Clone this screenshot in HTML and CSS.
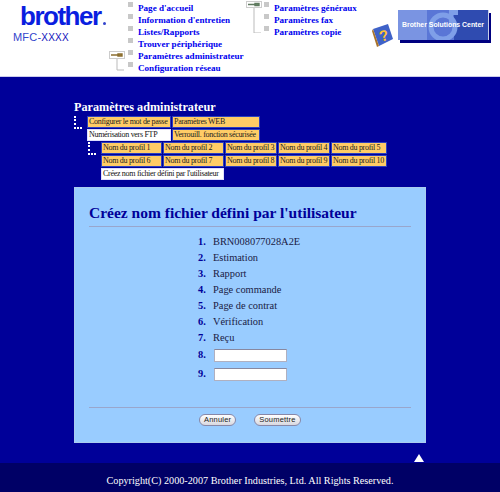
FILE: index.html
```html
<!DOCTYPE html>
<html lang="fr">
<head>
  <meta charset="UTF-8">
  <title>Créez nom fichier défini par l'utilisateur</title>
  <link rel="stylesheet" href="styles.css">
</head>
<body>
  <div class="header">
    <div class="brand">
      <div class="logo">brother<span class="logo-dot"></span></div>
      <div class="model">MFC-<span>XXXX</span></div>
    </div>
    <div class="nav nav-main">
      <svg class="tree" width="16" height="24" viewBox="0 0 16 24">
        <rect x="0.5" y="0.5" width="15" height="7" fill="#fff" stroke="#ccc"/>
        <path d="M2 4h7v-1h4v2h-4v-1" stroke="#8a6d2f" stroke-width="1.4" fill="#a88a40"/>
        <path d="M8 8v11h7" stroke="#bbb" fill="none"/>
      </svg>
      <ul>
        <li><a href="#">Page d'accueil</a></li>
        <li><a href="#">Information d'entretien</a></li>
        <li><a href="#">Listes/Rapports</a></li>
        <li><a href="#">Trouver périphérique</a></li>
        <li><a href="#">Paramètres administrateur</a></li>
        <li><a href="#">Configuration réseau</a></li>
      </ul>
    </div>
    <div class="nav nav-second">
      <svg class="tree" width="16" height="32" viewBox="0 0 16 32">
        <rect x="0.5" y="0.5" width="15" height="6" fill="#fff" stroke="#ccc"/>
        <path d="M2 3.5h7v-1h4v2h-4v-1" stroke="#5f7a5f" stroke-width="1.4" fill="#6a8a6a"/>
        <path d="M8 7v25h7" stroke="#bbb" fill="none"/>
      </svg>
      <ul>
        <li><a href="#">Paramètres généraux</a></li>
        <li><a href="#">Paramètres fax</a></li>
        <li><a href="#">Paramètres copie</a></li>
      </ul>
    </div>
    <svg class="book" width="22" height="25" viewBox="0 0 22 25">
      <path d="M1 6 16 1l5 15-14 7z" fill="#3f62c8"/>
      <path d="M1 6l6 17-2 1L0 8z" fill="#a8722a"/>
      <text x="7" y="18" class="book-mark" transform="rotate(-15 11 12)">?</text>
    </svg>
    <div class="solutions">
      <svg class="solutions-s" width="40" height="30" viewBox="0 0 40 30">
        <circle cx="17" cy="17" r="12" fill="none" stroke="#7f9fe8" stroke-width="5"/>
        <path d="M23 0h9v5h-5v10h-4z" fill="#7f9fe8"/>
      </svg>
      <span>Brother Solutions Center</span>
    </div>
  </div>

  <div class="main">
    <h2 class="section-title">Paramètres administrateur</h2>
    <div class="tabs">
      <div class="corner"></div>
      <div class="tab-grid tab-grid-top">
        <a class="tab" href="#">Configurer le mot de passe</a>
        <a class="tab" href="#">Paramètres WEB</a>
        <a class="tab active" href="#">Numérisation vers FTP</a>
        <a class="tab" href="#">Verrouill. fonction sécurisée</a>
      </div>
    </div>
    <div class="tabs tabs-sub">
      <div class="corner"></div>
      <div class="tab-grid tab-grid-sub">
        <a class="tab" href="#">Nom du profil 1</a>
        <a class="tab" href="#">Nom du profil 2</a>
        <a class="tab" href="#">Nom du profil 3</a>
        <a class="tab" href="#">Nom du profil 4</a>
        <a class="tab" href="#">Nom du profil 5</a>
        <a class="tab" href="#">Nom du profil 6</a>
        <a class="tab" href="#">Nom du profil 7</a>
        <a class="tab" href="#">Nom du profil 8</a>
        <a class="tab" href="#">Nom du profil 9</a>
        <a class="tab" href="#">Nom du profil 10</a>
        <a class="tab active tab-wide" href="#">Créez nom fichier défini par l'utilisateur</a>
      </div>
    </div>

    <div class="panel">
      <h1>Créez nom fichier défini par l'utilisateur</h1>
      <hr>
      <ol class="names">
        <li><b>1.</b><span>BRN008077028A2E</span></li>
        <li><b>2.</b><span>Estimation</span></li>
        <li><b>3.</b><span>Rapport</span></li>
        <li><b>4.</b><span>Page commande</span></li>
        <li><b>5.</b><span>Page de contrat</span></li>
        <li><b>6.</b><span>Vérification</span></li>
        <li><b>7.</b><span>Reçu</span></li>
        <li class="field"><b>8.</b><input type="text"></li>
        <li class="field"><b>9.</b><input type="text"></li>
      </ol>
      <hr class="rule-bottom">
      <div class="actions">
        <button type="button">Annuler</button>
        <button type="button">Soumettre</button>
      </div>
    </div>
    <div class="top-row"><span class="to-top"></span></div>
  </div>

  <div class="footer">Copyright(C) 2000-2007 Brother Industries, Ltd. All Rights Reserved.</div>
</body>
</html>
```

FILE: styles.css
```css
body {
  margin: 0;
  height: 492px;
  overflow: hidden;
  display: flex;
  flex-direction: column;
  background: #000099;
  font-family: "Liberation Serif", serif;
}
.header {
  height: 76px;
  background: #fff;
  border-bottom: 1px solid #ccccee;
  display: flex;
  flex-shrink: 0;
}
.brand {
  width: 96px;
  padding-left: 13px;
  flex-shrink: 0;
}
.logo {
  margin: 2px 0 0 7px;
  font-family: "Liberation Sans", sans-serif;
  font-weight: bold;
  font-size: 26px;
  line-height: 28px;
  letter-spacing: -1.5px;
  color: #0a1ee0;
  white-space: nowrap;
}
.logo-dot {
  display: inline-block;
  width: 3px;
  height: 3px;
  margin-left: 2px;
  border-radius: 50%;
  background: #3344cc;
}
.model {
  font-family: "Liberation Sans", sans-serif;
  font-size: 11px;
  line-height: 14px;
  letter-spacing: 0.2px;
  color: #3344cc;
}
.model span {
  font-size: 10px;
  color: #1111bb;
}
.nav {
  display: flex;
  align-items: flex-start;
}
.nav ul {
  list-style: none;
  margin: 0;
  padding: 0;
}
.nav li {
  height: 12px;
  line-height: 11px;
  padding-left: 10px;
  position: relative;
  white-space: nowrap;
}
.nav li::before {
  content: "";
  position: absolute;
  left: 0;
  top: 2px;
  width: 5px;
  height: 5px;
  background: #c8c8c8;
}
.nav a {
  font-size: 9.1px;
  font-weight: bold;
  color: #0000ee;
  text-decoration: none;
}
.nav-main {
  width: 137px;
}
.nav-main .tree {
  margin: 51px 3px 0 0;
  flex-shrink: 0;
}
.nav-second {
  width: 126px;
}
.nav-second .tree {
  margin: 1px 2px 0 0;
  flex-shrink: 0;
}
.book {
  margin: 23px 2px 0 0;
  flex-shrink: 0;
}
.book-mark {
  font-family: "Liberation Sans", sans-serif;
  font-weight: bold;
  font-size: 15px;
  fill: #ffc233;
}
.solutions {
  position: relative;
  width: 90px;
  height: 30px;
  margin: 10px 0 0 2px;
  background: linear-gradient(90deg, #7a94e2 0 32%, #5a76d6 32% 62%, #2f4bb0 62%);
  border-right: 1px solid #c8d0e8;
  box-shadow: 2px 3px 0 #000080;
  overflow: hidden;
}
.solutions-s {
  position: absolute;
  left: 28px;
  top: 0;
}
.solutions span {
  position: absolute;
  left: 4px;
  top: 9px;
  font-family: "Liberation Sans", sans-serif;
  font-weight: bold;
  font-size: 6.9px;
  line-height: 12px;
  white-space: nowrap;
  color: #fff;
}
.main {
  flex: 1;
  padding: 23px 0 0 74px;
}
.section-title {
  margin: 0 0 1px;
  font-size: 12.2px;
  line-height: 15px;
  color: #fff;
}
.tabs {
  display: flex;
  align-items: flex-start;
}
.tabs-sub {
  margin: 1px 0 0 14px;
}
.corner {
  width: 6px;
  height: 11px;
  margin-right: 5px;
  border-left: 2px dotted #fff;
  border-bottom: 2px dotted #fff;
  flex-shrink: 0;
}
.tab-grid {
  display: grid;
  gap: 1px;
  font-size: 8px;
  line-height: 10px;
  letter-spacing: -0.3px;
}
.tab-grid-top {
  grid-template-columns: 84px 88px;
}
.tab-grid-sub {
  grid-template-columns: 61px 61px 52px 52px 56px;
}
.tab {
  padding: 0 1px;
  background: #ffcc66;
  border: 1px solid #2a3fc0;
  box-sizing: border-box;
  height: 12px;
  color: #222;
  text-decoration: none;
  white-space: nowrap;
}
.tab.active {
  background: #fff;
  border-color: #ddddff;
  color: #111;
}
.tab-wide {
  grid-column: span 2;
}
.panel {
  width: 352px;
  height: 256px;
  margin-top: 7px;
  padding: 0 14px;
  box-sizing: border-box;
  background: #99ccff;
  border: 1px solid #aaccee;
}
.panel h1 {
  margin: 0;
  padding-top: 15px;
  font-size: 15.5px;
  line-height: 19px;
  color: #000099;
}
.panel hr {
  height: 1px;
  margin: 4px 0 0;
  border: 0;
  background: #99a6cc;
}
.panel hr.rule-bottom {
  margin-top: 24px;
}
.names {
  list-style: none;
  margin: 6px 0 0;
  padding: 0 0 0 109px;
}
.names li {
  display: flex;
  align-items: center;
  height: 16px;
  font-size: 10.4px;
  color: #1a1a44;
}
.names b {
  width: 15px;
  color: #000099;
}
.names li.field {
  height: 19px;
}
.names input {
  width: 73px;
  height: 13px;
  margin: 2px 0 0 1px;
  padding: 0;
  box-sizing: border-box;
  background: #fff;
  border: 1px solid #b0b0c0;
  border-top-color: #8888a0;
}
.actions {
  display: flex;
  gap: 18px;
  padding: 6px 0 0 110px;
}
.actions button {
  height: 12px;
  padding: 0 4px;
  background: linear-gradient(#ffffff, #d8d8e0);
  border: 1px solid #8888a8;
  border-radius: 6px;
  font-family: "Liberation Sans", sans-serif;
  font-size: 7.5px;
  line-height: 10px;
  letter-spacing: 0.2px;
  color: #222;
}
.top-row {
  width: 350px;
  padding-top: 11px;
  display: flex;
  justify-content: flex-end;
}
.to-top {
  width: 0;
  height: 0;
  border-left: 5px solid transparent;
  border-right: 5px solid transparent;
  border-bottom: 8px solid #fff;
}
.footer {
  height: 29px;
  flex-shrink: 0;
  box-sizing: border-box;
  padding-top: 11px;
  background: #000066;
  text-align: center;
  font-size: 10.2px;
  line-height: 14px;
  color: #fff;
}
```
